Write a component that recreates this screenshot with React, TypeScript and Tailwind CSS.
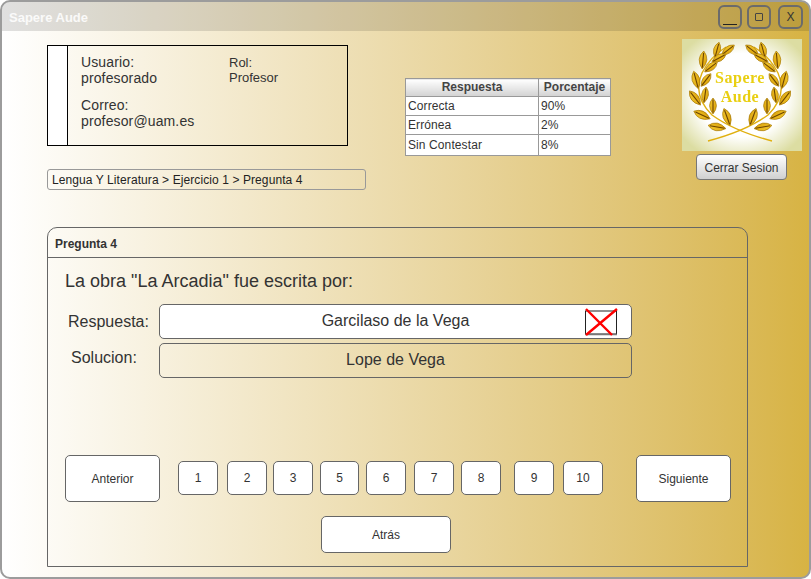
const leaves: [number, number, number, number][] = [
  [35, 11, 15, 8], [46, 11, 52, 8], [37, 19, 62, 8], [21, 21, 5, 9], [29, 28, 52, 8],
  [14, 41, -15, 9], [24, 41, 38, 8], [13, 59, -38, 9], [23, 56, 8, 8], [20, 76, -65, 9],
  [31, 67, 0, 8], [35, 88, -80, 9], [45, 78, -20, 9],
];

function Wreath() {
  const side = (
    <>
      <path d="M90 102 Q 52 92 30 76 Q 10 56 20 34 Q 28 18 44 8" fill="none" stroke="#e0b010" strokeWidth="1.4" />
      {leaves.map(([x, y, r, l], i) => (
        <g key={i} transform={`translate(${x} ${y}) rotate(${r})`}>
          <path d={`M0 ${-l} Q ${l * 0.85} ${-l * 0.1} 0 ${l} Q ${-l * 0.85} ${-l * 0.1} 0 ${-l}Z`} fill="url(#leaf)" stroke="#a87a06" strokeWidth="0.7" />
          <path d={`M0 ${-l * 0.8} L0 ${l * 0.85}`} stroke="#6b4300" strokeWidth="1.1" />
        </g>
      ))}
    </>
  );
  return (
    <svg width="120" height="112" viewBox="0 0 120 112" className="block">
      <defs>
        <radialGradient id="halo" cx="50%" cy="50%" r="62%">
          <stop offset="0" stopColor="#ffffff" />
          <stop offset="0.6" stopColor="#ffffff" />
          <stop offset="1" stopColor="#dcdda2" />
        </radialGradient>
        <linearGradient id="leaf" x1="0" y1="0" x2="1" y2="1">
          <stop offset="0" stopColor="#f5cc30" />
          <stop offset="1" stopColor="#d89c06" />
        </linearGradient>
      </defs>
      <rect width="120" height="112" fill="url(#halo)" />
      <g className="blur-[0.4px]">
        {side}
        <g transform="translate(116 0) scale(-1 1)">{side}</g>
        <text x="58" y="44" textAnchor="middle" fontFamily="'Liberation Serif', serif" fontWeight="700" fontSize="16" fill="#e9cf12" letterSpacing="0.5">Sapere</text>
        <text x="58" y="63" textAnchor="middle" fontFamily="'Liberation Serif', serif" fontWeight="700" fontSize="16" fill="#e9cf12" letterSpacing="0.5">Aude</text>
      </g>
    </svg>
  );
}

const winBtn = "box-border h-6 rounded-[6px] border-2 border-[#6b6b6b] flex items-center justify-center text-[12px] text-[#333]";
const pageBtn = "box-border h-[34px] mt-[6px] rounded-[5px] border border-[#666] bg-white flex items-center justify-center text-[12px] text-[#333]";
const bigBtn = "box-border w-[95px] h-[47px] rounded-[5px] border border-[#666] bg-white flex items-center justify-center text-[12px] text-[#333]";
const cell = "border border-[#999] px-[2px] py-0 text-[12px] leading-[15px] tracking-[0.1px] font-normal text-[#333] bg-white text-left";
const head = "border border-[#999] px-[2px] py-0 text-[12px] leading-[15px] font-bold text-[#444] bg-gradient-to-b from-white to-[#d2d2d2] text-center";

export default function App() {
  return (
    <div className="box-border w-[811px] h-[579px] overflow-hidden rounded-[10px] border-2 border-[#9c9c9c] bg-gradient-to-r from-white to-[#d7b343] font-['Liberation_Sans',Arial,sans-serif]">
      <div className="h-[29px] bg-black/12 flex items-start pl-[7px] pr-[6px]">
        <span className="mt-[7px] text-[13px] leading-[17px] font-bold text-white/85">Sapere Aude</span>
        <div className="ml-auto mt-[3px] flex">
          <div className={`${winBtn} w-6`}>
            <span className="block w-[14px] h-[1px] mt-[14px] bg-[#222]" />
          </div>
          <div className={`${winBtn} w-[24px] ml-[5px]`}>
            <span className="block w-[8px] h-[8px] rounded-[1px] border border-[#444]" />
          </div>
          <div className={`${winBtn} w-[25px] ml-[7px]`}>X</div>
        </div>
      </div>

      <div className="h-[196px] flex items-start pl-[45px]">
        <div className="w-[319px] mt-[14px]">
          <div className="box-border w-[301px] h-[101px] border border-black flex">
            <div className="w-[19px] bg-white border-r border-black box-content" />
            <div className="flex pl-[13px] pt-[8px] text-[#333]">
              <div className="w-[148px] text-[14px] leading-[16px] tracking-[0.13px]">
                <div>Usuario:</div>
                <div>profesorado</div>
                <div className="mt-[11px]">Correo:</div>
                <div>profesor@uam.es</div>
              </div>
              <div className="text-[13px] leading-[15px] pt-[1px]">
                <div>Rol:</div>
                <div>Profesor</div>
              </div>
            </div>
          </div>
          <div className="box-border mt-[23px] h-[21px] rounded-[3px] border border-[#999] pl-[4px] flex items-center text-[12px] tracking-[0.09px] text-[#222]">
            Lengua Y Literatura &gt; Ejercicio 1 &gt; Pregunta 4
          </div>
        </div>

        <table className="ml-[39px] mt-[47px] w-[206px] border-collapse table-fixed">
          <thead>
            <tr className="h-[18px]">
              <th className={`${head} w-[133px]`}>Respuesta</th>
              <th className={head}>Porcentaje</th>
            </tr>
          </thead>
          <tbody>
            <tr className="h-[19px]"><td className={cell}>Correcta</td><td className={cell}>90%</td></tr>
            <tr className="h-[19px]"><td className={cell}>Errónea</td><td className={cell}>2%</td></tr>
            <tr className="h-[21px]"><td className={cell}>Sin Contestar</td><td className={cell}>8%</td></tr>
          </tbody>
        </table>

        <div className="ml-[71px] mt-[8px] w-[120px]">
          <Wreath />
          <div className="box-border ml-[14px] mt-[3px] w-[91px] h-[26px] rounded-[4px] border border-[#777] bg-gradient-to-b from-white to-[#d0d0d0] flex items-center justify-center pt-[1px] text-[12px] text-[#333]">
            Cerrar Sesion
          </div>
        </div>
      </div>

      <div className="box-border ml-[45px] w-[701px] h-[340px] rounded-t-[10px] border border-[#666]">
        <div className="box-border h-[30px] border-b border-[#666] pl-[7px] pt-[3px] flex items-center text-[12px] font-bold text-[#333]">
          Pregunta 4
        </div>
        <div className="ml-[17px] mt-[11px] text-[18px] leading-[24px] text-[#333]">
          La obra "La Arcadia" fue escrita por:
        </div>
        <div className="flex items-start pl-[20px] mt-[11px]">
          <div className="w-[91px] pt-[9px] text-[16px] leading-[18px] text-[#333]">Respuesta:</div>
          <div className="relative box-border w-[473px] h-[35px] rounded-[5px] border border-[#666] bg-white flex items-center justify-center pb-[1px] text-[16px] text-[#333]">
            Garcilaso de la Vega
            <svg className="absolute left-[424px] top-[3px]" width="36" height="28" viewBox="0 0 36 28">
              <rect x="1.5" y="3" width="31" height="23" fill="#fff" stroke="#222" strokeWidth="1" />
              <path d="M1 26.5H33" stroke="#777" strokeWidth="1.5" />
              <path d="M2 1 L28 27 M33 1 L2 27" stroke="#ff0000" strokeWidth="2.4" fill="none" />
            </svg>
          </div>
        </div>
        <div className="flex items-start pl-[23px] mt-[4px]">
          <div className="w-[88px] pt-[6px] text-[16px] leading-[18px] text-[#333]">Solucion:</div>
          <div className="box-border w-[473px] h-[35px] rounded-[5px] border border-[#666] flex items-center justify-center pb-[1px] text-[16px] text-[#333]">
            Lope de Vega
          </div>
        </div>

        <div className="flex items-start pl-[17px] mt-[77px]">
          <div className={bigBtn}>Anterior</div>
          <div className={`${pageBtn} w-10 ml-[18px]`}>1</div>
          <div className={`${pageBtn} w-10 ml-[9px]`}>2</div>
          <div className={`${pageBtn} w-10 ml-[6px]`}>3</div>
          <div className={`${pageBtn} w-[39px] ml-[7px]`}>5</div>
          <div className={`${pageBtn} w-10 ml-[7px]`}>6</div>
          <div className={`${pageBtn} w-10 ml-[8px]`}>7</div>
          <div className={`${pageBtn} w-10 ml-[7px]`}>8</div>
          <div className={`${pageBtn} w-10 ml-[13px]`}>9</div>
          <div className={`${pageBtn} w-10 ml-[9px]`}>10</div>
          <div className={`${bigBtn} ml-[33px]`}>Siguiente</div>
        </div>
        <div className="box-border ml-[273px] mt-[14px] w-[130px] h-[37px] rounded-[5px] border border-[#666] bg-white flex items-center justify-center text-[12px] text-[#333]">
          Atrás
        </div>
      </div>
    </div>
  );
}
